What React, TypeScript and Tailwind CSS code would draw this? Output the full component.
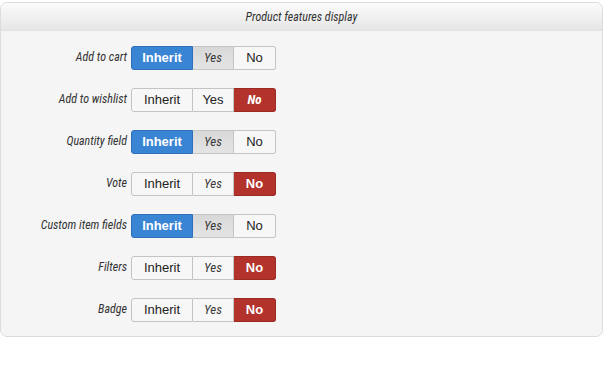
import React from "react";

type Mode = "a" | "b" | "c";
// a: Inherit active; b: No active italic, Yes normal; c: No active bold, Yes italic
const rows: { label: string; mode: Mode }[] = [
  { label: "Add to cart", mode: "a" },
  { label: "Add to wishlist", mode: "b" },
  { label: "Quantity field", mode: "a" },
  { label: "Vote", mode: "c" },
  { label: "Custom item fields", mode: "a" },
  { label: "Filters", mode: "c" },
  { label: "Badge", mode: "c" },
];

const cond = { fontFamily: '"Liberation Sans Narrow", "Roboto Condensed", "Arial Narrow", sans-serif' };
const sans = { fontFamily: '"Liberation Sans", Arial, sans-serif' };

function Group({ mode }: { mode: Mode }) {
  const base = "h-[24px] flex items-center justify-center text-[13px] border";
  const normal = "bg-[#f7f7f7] border-[#c4c4c4] text-[#222]";
  return (
    <div className="flex" style={sans}>
      {mode === "a" ? (
        <div className={`${base} w-[62px] rounded-l-[3px] bg-[#3a84d4] border-[#2f6fb8] text-white font-bold`}>Inherit</div>
      ) : (
        <div className={`${base} w-[62px] rounded-l-[3px] ${normal}`}>Inherit</div>
      )}
      {mode === "a" ? (
        <div className={`${base} w-[41px] border-l-0 bg-[linear-gradient(#d8d8d8,#e4e4e4)] border-[#c4c4c4] text-[#3a3a3a] italic !text-[13px]`} style={cond}>Yes</div>
      ) : mode === "b" ? (
        <div className={`${base} w-[41px] border-l-0 ${normal}`}>Yes</div>
      ) : (
        <div className={`${base} w-[41px] border-l-0 ${normal} italic !text-[13px] !text-[#3a3a3a]`} style={cond}>Yes</div>
      )}
      {mode === "a" ? (
        <div className={`${base} w-[42px] border-l-0 rounded-r-[3px] ${normal}`}>No</div>
      ) : mode === "b" ? (
        <div className={`${base} w-[42px] border-l-0 rounded-r-[3px] bg-[#b3322b] border-[#9c2a24] text-white italic font-bold !text-[13px]`} style={cond}>No</div>
      ) : (
        <div className={`${base} w-[42px] border-l-0 rounded-r-[3px] bg-[#b3322b] border-[#9c2a24] text-white font-bold`}>No</div>
      )}
    </div>
  );
}

export default function App() {
  return (
    <div className="w-[610px] h-[372px] bg-white pt-[2px]">
      <div className="w-[603px] border border-[#dcdcdc] rounded-[7px] bg-[#f5f5f5] overflow-hidden">
        <div
          className="h-[28px] flex items-center justify-center border-b border-[#e2e2e2] bg-[linear-gradient(#fbfbfb,#e6e6e6)] text-[12px] italic text-[#333]"
          style={cond}
        >
          Product features display
        </div>
        <div className="flex flex-col gap-[18px] pt-[15px] pb-[14px]">
          {rows.map((r) => (
            <div key={r.label} className="flex items-center">
              <div className="w-[127px] pr-[1px] text-right text-[12px] italic text-[#333] -mt-[3px]" style={cond}>
                {r.label}
              </div>
              <div className="ml-[3px]">
                <Group mode={r.mode} />
              </div>
            </div>
          ))}
        </div>
      </div>
    </div>
  );
}
